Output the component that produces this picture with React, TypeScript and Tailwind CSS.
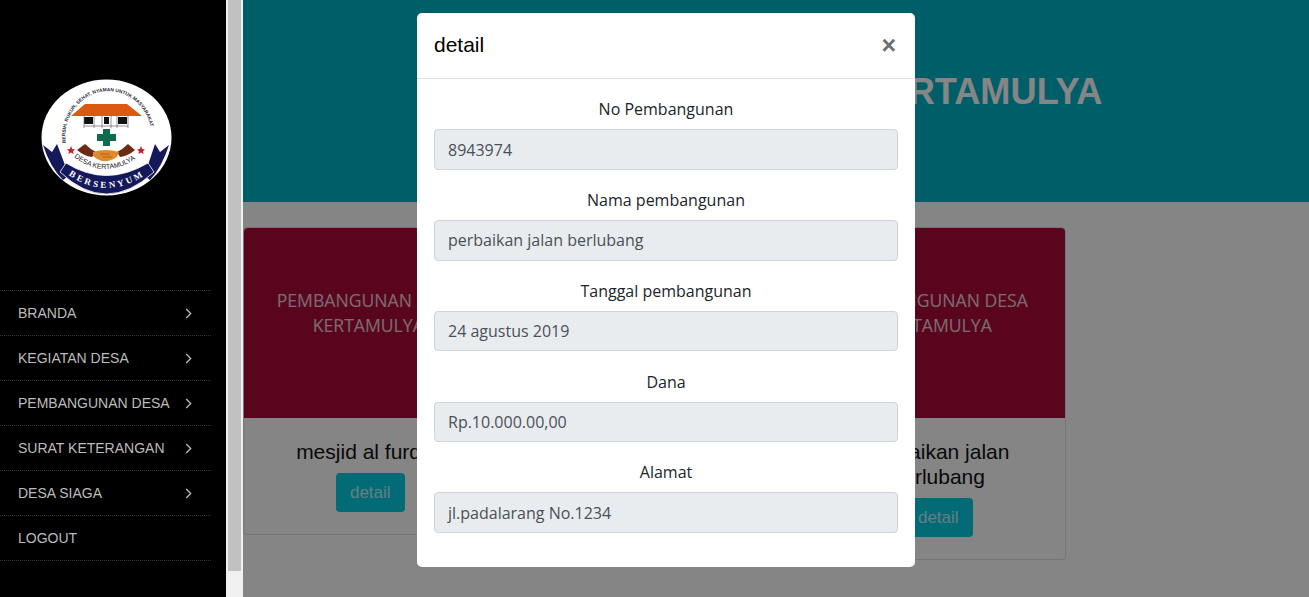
const menu = ["BRANDA", "KEGIATAN DESA", "PEMBANGUNAN DESA", "SURAT KETERANGAN", "DESA SIAGA"];

const fields = [
  { label: "No Pembangunan", value: "8943974" },
  { label: "Nama pembangunan", value: "perbaikan jalan berlubang" },
  { label: "Tanggal pembangunan", value: "24 agustus 2019" },
  { label: "Dana", value: "Rp.10.000.00,00" },
  { label: "Alamat", value: "jl.padalarang No.1234" },
];

const cards = ["mesjid al furqon", "perbaikan jalan berlubang"];

function Logo() {
  return (
    <svg width="150" height="135" viewBox="0 0 150 135">
      <defs>
        <path id="outerArc" d="M36 74 A43 45 0 1 1 121 72" />
        <path id="desaArc" d="M44 87 Q76 112 111 85" />
        <path id="bannerArc" d="M36 103 Q76 133 118 103" />
      </defs>
      <ellipse cx="76.5" cy="67.5" rx="65" ry="58" fill="#fff" />
      <text fontSize="4.9" fontWeight="700" fontFamily="Liberation Sans, sans-serif" fill="#2a2a3a">
        <textPath href="#outerArc" startOffset="1">BERSIH, RUKUN, SEHAT, NYAMAN UNTUK MASYARAKAT</textPath>
      </text>
      <path d="M41 46 L55 34 H97 L112 46 Z" fill="#dc5a10" />
      <rect x="54" y="47" width="9" height="7" fill="#111" />
      <rect x="74" y="47" width="5" height="7" fill="#111" />
      <rect x="88" y="47" width="9" height="7" fill="#111" />
      <path d="M54 46 V58 M64 46 V58 M72 46 V58 M81 46 V58 M87 46 V58 M98 46 V58 M54 56 H98" stroke="#666" strokeWidth="0.7" />
      <path d="M73 59 H80 V64 H86 V71 H80 V76 H73 V71 H67 V64 H73 Z" fill="#0e6b50" />
      <path d="M41 76 L42.2 79 L45 79.4 L43 81.3 L43.6 84 L41 82.5 L38.4 84 L39 81.3 L37 79.4 L39.8 79 Z" fill="#c8202a" />
      <path d="M111 76 L112.2 79 L115 79.4 L113 81.3 L113.6 84 L111 82.5 L108.4 84 L109 81.3 L107 79.4 L109.8 79 Z" fill="#c8202a" />
      <path d="M47 80 L55 74 Q60 79 66 82 L62 87 Q54 86 47 80 Z" fill="#6b2a14" />
      <path d="M105 80 L98 74 Q93 79 87 82 L90 87 Q98 86 105 80 Z" fill="#6b2a14" />
      <path d="M63 82 Q76 78 89 82 L87 87 Q80 92 72 91 Q66 89 63 86 Z" fill="#e08a2c" />
      <path d="M70 84 L80 84 M73 87 L82 87" stroke="#8a4a10" strokeWidth="0.6" />
      <text fontSize="7" fontFamily="Liberation Sans, sans-serif" fill="#1a1a2a">
        <textPath href="#desaArc" startOffset="0">DESA KERTAMULYA</textPath>
      </text>
      <path d="M13 75 L22 82 L27 74 L35 95 L45 101 L33 110 Q20 97 13 75 Z" fill="#14195c" />
      <path d="M139 75 L130 82 L125 74 L118 95 L108 101 L120 110 Q132 97 139 75 Z" fill="#14195c" />
      <path d="M30 102 L36 93 Q76 118 118 93 L124 102 Q76 146 30 102 Z" fill="#14195c" stroke="#fff" strokeWidth="0.8" />
      <text fontSize="9" fontFamily="Liberation Serif, serif" fill="#fff" letterSpacing="2.8" fontWeight="700">
        <textPath href="#bannerArc" startOffset="3">BERSENYUM</textPath>
      </text>
    </svg>
  );
}

function Sidebar() {
  return (
    <div className="w-[226px] shrink-0 bg-black">
      <div className="ml-[30px] mt-[70px] mb-[85px] h-[135px]">
        <Logo />
      </div>
      <ul className="w-[211px] border-b border-dotted border-[#333] font-['Liberation_Sans',sans-serif] text-[14px] text-[#bcbcbc]">
        {menu.map((item) => (
          <li key={item} className="flex h-[45px] items-center justify-between border-t border-dotted border-[#333] pl-[18px] pr-[19px]">
            <span>{item}</span>
            <svg width="7" height="11" viewBox="0 0 7 11" fill="none" stroke="#bcbcbc" strokeWidth="1.3">
              <path d="M1.2 1 L5.7 5.5 L1.2 10" />
            </svg>
          </li>
        ))}
        <li className="flex h-[45px] items-center border-t border-dotted border-[#333] pl-[18px]">LOGOUT</li>
      </ul>
    </div>
  );
}

function Card({ title }: { title: string }) {
  return (
    <div className="w-[254.5px] shrink-0 rounded border border-[#e0e0e0] bg-white pb-[22px] text-center">
      <div className="flex h-[190px] items-center justify-center rounded-t bg-[#ad0b3a] pb-5 pl-[14px] pr-[18px] font-['Open_Sans',sans-serif] text-[17.6px] leading-[25px] text-white/80">
        PEMBANGUNAN DESA KERTAMULYA
      </div>
      <h5 className="mx-auto mt-[21px] w-[200px] font-['Liberation_Sans',sans-serif] text-[21px] leading-[25px] text-[#111]">{title}</h5>
      <button className="mt-[9px] h-[39px] w-[69px] rounded bg-[#06cee3] font-['Liberation_Sans',sans-serif] text-[17px] text-white/75">detail</button>
    </div>
  );
}

function Modal() {
  return (
    <div className="absolute left-[174px] top-[13px] h-[554px] w-[498px] rounded-[5px] bg-white">
      <div className="flex h-[66px] items-center justify-between border-b border-[#dee2e6] pb-[2px] pl-[17px] pr-[19px] font-['Liberation_Sans',sans-serif]">
        <span className="text-[21px] text-black">detail</span>
        <span className="mt-[2px] text-[25px] font-bold leading-none text-[#6f6f6f]">×</span>
      </div>
      <div className="px-[17px] pt-[18.3px] font-['Open_Sans',sans-serif] text-[16px]">
        {fields.map((f) => (
          <div key={f.label} className="mb-[18.25px]">
            <div className="mb-2 h-6 text-center leading-6 text-[#212529]">{f.label}</div>
            <div className="flex h-[40.5px] items-center rounded border border-[#ced4da] bg-[#e9ecef] px-[13px] text-[#495057]">{f.value}</div>
          </div>
        ))}
      </div>
    </div>
  );
}

export default function App() {
  return (
    <div className="flex h-[597px] w-[1309px] overflow-hidden">
      <Sidebar />
      <div className="w-[17px] shrink-0 bg-[#f1f1f1] pl-[2px]">
        <div className="h-[571px] w-[13px] bg-[#c1c1c1]" />
      </div>
      <div className="relative flex-1 bg-white">
        <div className="flex h-[202px] items-center justify-center bg-[#00b5ca] pb-[18px] font-['Liberation_Sans',sans-serif] text-[36.2px] font-bold text-white">
          PEMBANGUNAN DESA KERTAMULYA
        </div>
        <div className="mt-[25px] flex items-start gap-[313.5px]">
          {cards.map((c) => (
            <Card key={c} title={c} />
          ))}
        </div>
        <div className="absolute inset-0 bg-black/[.48]" />
        <Modal />
      </div>
    </div>
  );
}
